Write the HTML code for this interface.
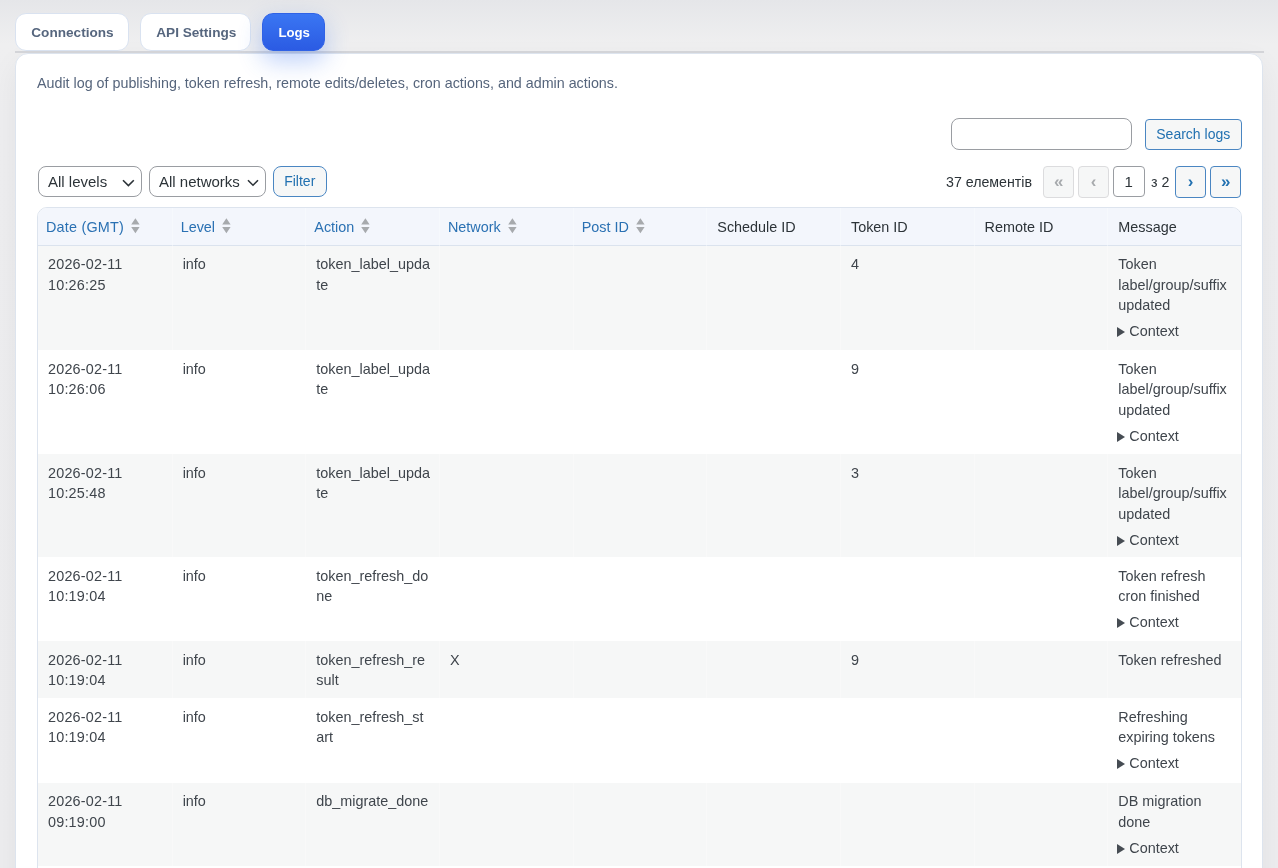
<!DOCTYPE html>
<html><head><meta charset="utf-8">
<style>
*{box-sizing:border-box}
html,body{margin:0;padding:0;width:1278px;height:868px;overflow:hidden}
body{-webkit-font-smoothing:antialiased;font-family:"Liberation Sans",sans-serif;color:#3c434a;font-size:14px;
 background:linear-gradient(180deg,#e5e6e9 0px,#efeff0 44px,#eeeef0 120px,#ededef 100%);position:relative}
.tabs{position:absolute;left:0;top:0;width:1278px;height:60px}
.tab{position:absolute;top:13px;height:37.8px;border:1px solid #d9e2f0;background:#fff;border-radius:11px;
 font-weight:bold;font-size:13.6px;color:#56667e;line-height:35.8px;text-align:center;padding-top:0.8px;padding-left:1.4px}
.tab.active{background:linear-gradient(180deg,#3a76f3,#2b5be3);border-color:#2f62e6;color:#fff;
 box-shadow:0 10px 24px rgba(37,99,235,.3)}
.navline{position:absolute;left:15px;top:51px;width:1249px;height:2px;background:#d3d4d8}
.panel{position:absolute;left:15px;top:53px;width:1248px;height:900px;background:#fff;border:1px solid #dde4ee;border-radius:13px;box-shadow:0 10px 30px rgba(16,24,40,.055)}
.desc{position:absolute;left:37px;top:72.8px;font-size:14.3px;color:#56657c;line-height:20px;white-space:nowrap}
.inp{position:absolute;background:#fff;border:1.2px solid #9a9da2;border-radius:8px}
.btn{position:absolute;background:#f6f7f7;border:1px solid #4a86c2;color:#2271b1;border-radius:4px;text-align:center;font-size:14px;white-space:nowrap}
.btn.dis{border-color:#dcdcde;color:#a7aaad}
.sel{position:absolute;background:#fff;border:1.2px solid #9a9da2;border-radius:8px;color:#2c3338;font-size:15px;white-space:nowrap}
.sel span{position:absolute;left:9px;top:4.5px;line-height:20px}
.sel svg{position:absolute;top:12px}
table{position:absolute;left:37px;top:207px;width:1205px;border-collapse:separate;border-spacing:0;table-layout:fixed;
 border:1px solid #dde4ee;border-radius:10px 10px 0 0;overflow:hidden}
th,td{text-align:left;vertical-align:top;font-weight:normal}
th{background:#f3f6fc;border-bottom:1px solid #dbe3ee;padding:8.5px 10px 8px;line-height:20px;font-size:14.4px;color:#2c3338;white-space:nowrap}
th.s{padding:8.5px 8px 8px;color:#2a71b3}
td{padding:8.5px 10px 0;line-height:20.5px;font-size:14.4px;color:#3f454c;border-left:1px solid rgba(255,255,255,.3)}
th{border-left:1px solid rgba(255,255,255,.3)}
th:first-child,td:first-child{border-left:none}
td.d{letter-spacing:.2px}
tr.o td{background:#f6f7f7}
tr.e td{background:#fff}
.arr{display:inline-block;vertical-align:top;margin-left:7px;margin-top:1.3px}
.ctx{margin-top:5.5px;margin-left:-1px}
.tri{display:inline-block;width:0;height:0;border-left:8px solid #464c53;border-top:5px solid transparent;border-bottom:5px solid transparent;margin-right:4px;vertical-align:-1px}
</style></head><body>
<div style="position:absolute;left:0;top:0;width:1278px;height:868px;will-change:transform">
<div class="panel"></div>
<div class="navline"></div>
<div class="tab" style="left:15px;width:113.5px">Connections</div>
<div class="tab" style="left:139.7px;width:111.8px">API Settings</div>
<div class="tab active" style="left:262px;width:63px;font-size:13.2px">Logs</div>
<div class="desc">Audit log of publishing, token refresh, remote edits/deletes, cron actions, and admin actions.</div>

<div class="inp" style="left:951px;top:118.3px;width:181px;height:31.3px"></div>
<div class="btn" style="left:1145px;top:118.5px;width:96.5px;height:31px;line-height:29px">Search logs</div>

<div class="sel" style="left:38px;top:166.2px;width:103.5px;height:31px"><span>All levels</span>
<svg style="left:82.5px;top:12px" width="13" height="9" viewBox="0 0 13 9"><path d="M1 1.2l5.4 5.4 5.4-5.4" fill="none" stroke="#2c3338" stroke-width="1.6"/></svg></div>
<div class="sel" style="left:149px;top:166.2px;width:117px;height:31px"><span>All networks</span>
<svg style="left:96.5px;top:12px" width="12" height="9" viewBox="0 0 12 9"><path d="M1 1.2l5 5 5-5" fill="none" stroke="#2c3338" stroke-width="1.6"/></svg></div>
<div class="btn" style="left:272.5px;top:166.2px;width:54.5px;height:31px;line-height:29px;border-radius:8px">Filter</div>

<div style="position:absolute;left:946px;top:172px;line-height:20px;font-size:14.2px;color:#2c3338;white-space:nowrap">37 елементів</div>
<div class="btn dis" style="left:1043px;top:166px;width:31.3px;height:31.5px;line-height:29px;font-size:17px;font-weight:bold">«</div>
<div class="btn dis" style="left:1078px;top:166px;width:31.3px;height:31.5px;line-height:29px;font-size:17px;font-weight:bold">‹</div>
<div class="inp" style="left:1113px;top:166px;width:31.5px;height:31px;border-radius:4px;text-align:center;line-height:29px;font-size:15px;color:#2c3338">1</div>
<div style="position:absolute;left:1151px;top:172px;line-height:20px;font-size:14.2px;color:#2c3338;white-space:nowrap">з 2</div>
<div class="btn" style="left:1175px;top:166px;width:31.3px;height:31.5px;line-height:29px;font-size:17px;font-weight:bold">›</div>
<div class="btn" style="left:1210px;top:166px;width:31.3px;height:31.5px;line-height:29px;font-size:17px;font-weight:bold">»</div>

<table>
<colgroup><col><col><col><col><col><col><col><col><col></colgroup>
<thead><tr>
<th class="s"><span style="letter-spacing:.2px">Date (GMT)</span><svg class="arr" width="9" height="16" viewBox="0 0 9 16"><path d="M0.2 6.4L4.4 0.2L8.6 6.4Z M0.2 8.9H8.6L4.4 15.2Z" fill="#a7aaad"/></svg></th>
<th class="s">Level<svg class="arr" width="9" height="16" viewBox="0 0 9 16"><path d="M0.2 6.4L4.4 0.2L8.6 6.4Z M0.2 8.9H8.6L4.4 15.2Z" fill="#a7aaad"/></svg></th>
<th class="s">Action<svg class="arr" width="9" height="16" viewBox="0 0 9 16"><path d="M0.2 6.4L4.4 0.2L8.6 6.4Z M0.2 8.9H8.6L4.4 15.2Z" fill="#a7aaad"/></svg></th>
<th class="s">Network<svg class="arr" width="9" height="16" viewBox="0 0 9 16"><path d="M0.2 6.4L4.4 0.2L8.6 6.4Z M0.2 8.9H8.6L4.4 15.2Z" fill="#a7aaad"/></svg></th>
<th class="s">Post ID<svg class="arr" width="9" height="16" viewBox="0 0 9 16"><path d="M0.2 6.4L4.4 0.2L8.6 6.4Z M0.2 8.9H8.6L4.4 15.2Z" fill="#a7aaad"/></svg></th>
<th>Schedule ID</th>
<th>Token ID</th>
<th>Remote ID</th>
<th>Message</th>
</tr></thead>
<tbody>
<tr class="o" style="height:104.5px"><td class="d">2026-02-11<br>10:26:25</td><td>info</td><td>token_label_upda<br>te</td><td></td><td></td><td></td><td>4</td><td></td><td>Token<br>label/group/suffix<br>updated<div class="ctx"><span class="tri"></span>Context</div></td></tr>
<tr class="e" style="height:104.3px"><td class="d">2026-02-11<br>10:26:06</td><td>info</td><td>token_label_upda<br>te</td><td></td><td></td><td></td><td>9</td><td></td><td>Token<br>label/group/suffix<br>updated<div class="ctx"><span class="tri"></span>Context</div></td></tr>
<tr class="o" style="height:103.2px"><td class="d">2026-02-11<br>10:25:48</td><td>info</td><td>token_label_upda<br>te</td><td></td><td></td><td></td><td>3</td><td></td><td>Token<br>label/group/suffix<br>updated<div class="ctx"><span class="tri"></span>Context</div></td></tr>
<tr class="e" style="height:84px"><td class="d">2026-02-11<br>10:19:04</td><td>info</td><td>token_refresh_do<br>ne</td><td></td><td></td><td></td><td></td><td></td><td>Token refresh<br>cron finished<div class="ctx"><span class="tri"></span>Context</div></td></tr>
<tr class="o" style="height:57px"><td class="d">2026-02-11<br>10:19:04</td><td>info</td><td>token_refresh_re<br>sult</td><td>X</td><td></td><td></td><td>9</td><td></td><td>Token refreshed</td></tr>
<tr class="e" style="height:84.2px"><td class="d">2026-02-11<br>10:19:04</td><td>info</td><td>token_refresh_st<br>art</td><td></td><td></td><td></td><td></td><td></td><td>Refreshing<br>expiring tokens<div class="ctx"><span class="tri"></span>Context</div></td></tr>
<tr class="o" style="height:83.3px"><td class="d">2026-02-11<br>09:19:00</td><td>info</td><td>db_migrate_done</td><td></td><td></td><td></td><td></td><td></td><td>DB migration<br>done<div class="ctx"><span class="tri"></span>Context</div></td></tr>
<tr class="e" style="height:60px"><td>&nbsp;</td><td></td><td></td><td></td><td></td><td></td><td></td><td></td><td></td></tr>
</tbody></table>
</div>
</body></html>
